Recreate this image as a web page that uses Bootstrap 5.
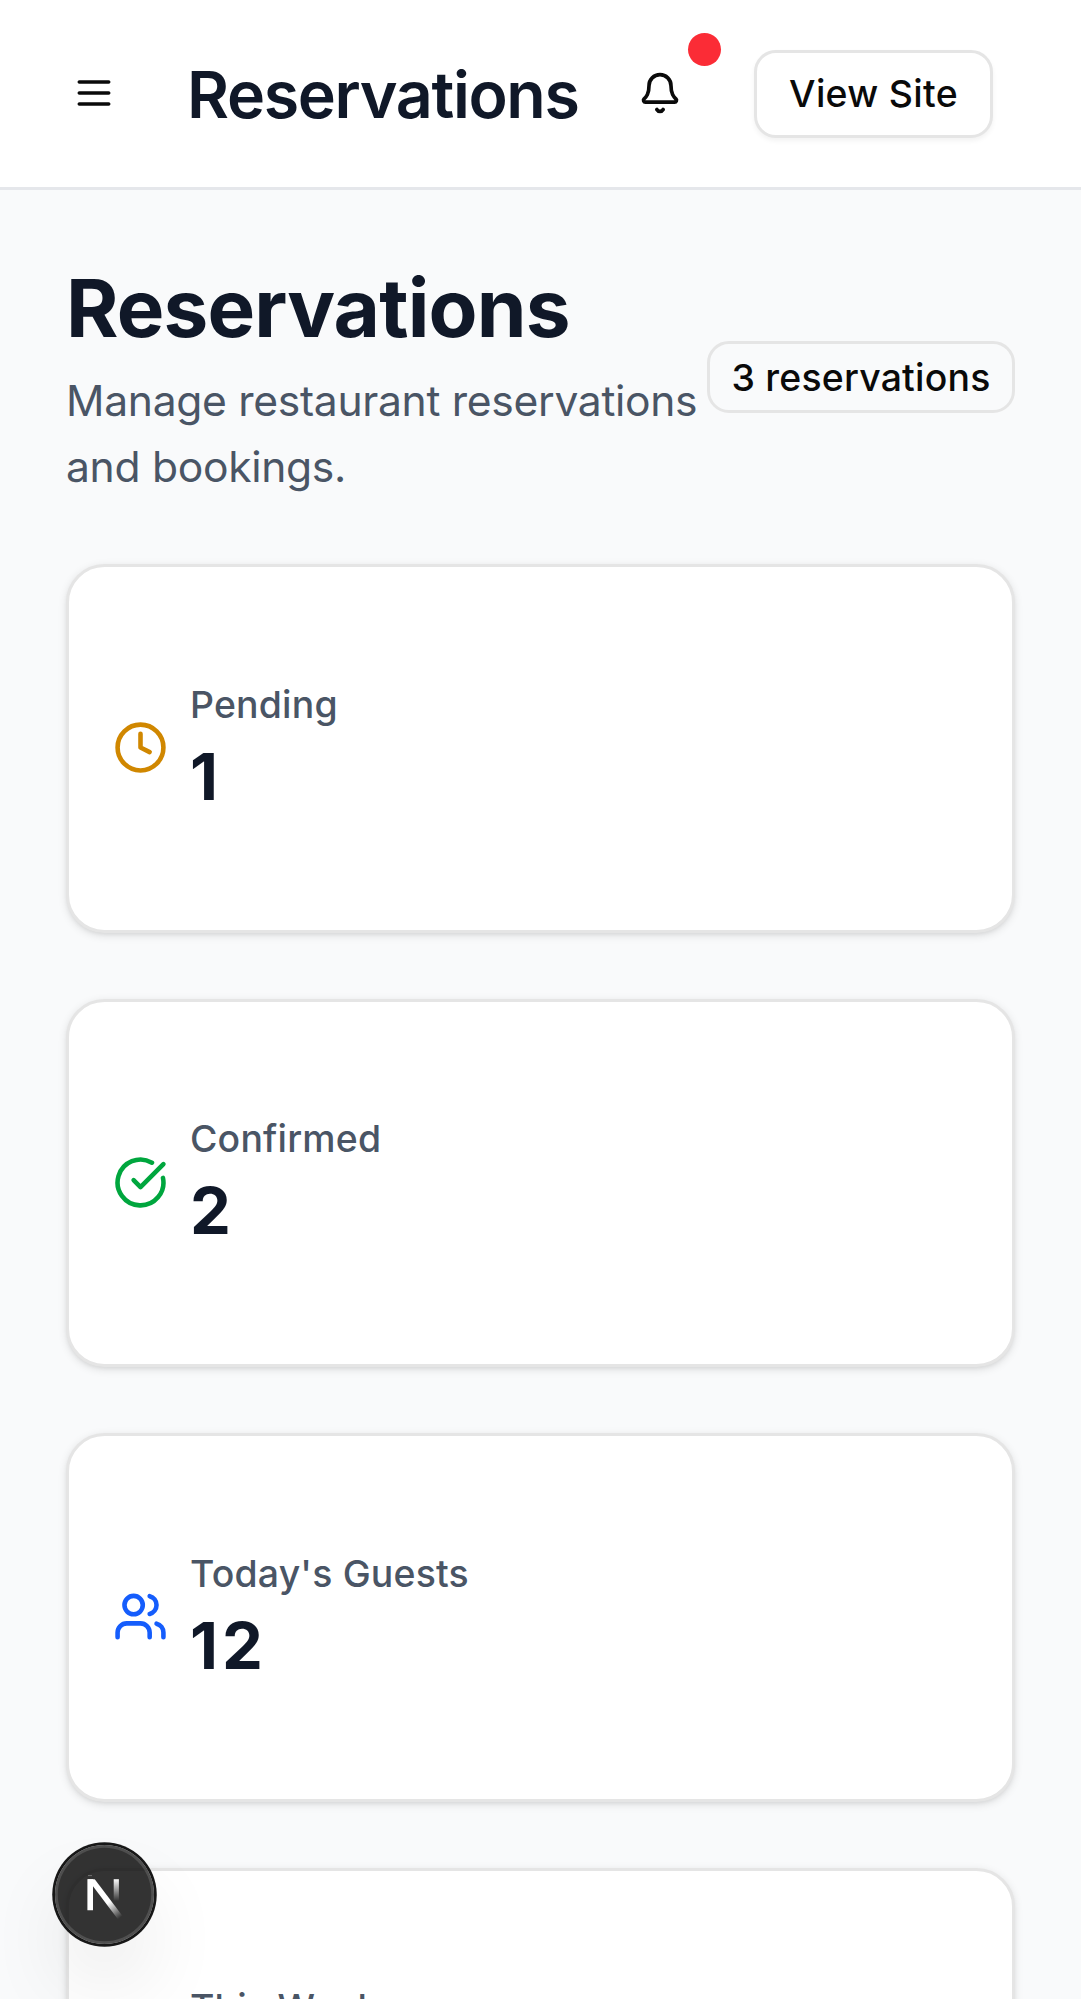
<!DOCTYPE html>
<html lang="en">
<head>
<meta charset="utf-8">
<meta name="viewport" content="width=device-width, initial-scale=1">
<title>Reservations</title>
<link href="https://cdn.jsdelivr.net/npm/bootstrap@5.3.0/dist/css/bootstrap.min.css" rel="stylesheet">
<style>
  body{font-family:Inter,"Noto Sans",sans-serif;background:#f9fafb;color:#0a0a0a;height:1999px;overflow:hidden}
  .topbar{height:190px;padding:0 88px 0 44px;border-bottom:3px solid #e5e7eb;background:#fff}
  .icon-btn{width:99px;height:88px;padding:0 0 1px;border:0;color:#0a0a0a}
  .bell-btn{margin-left:auto}
  .alert-dot{position:absolute;width:33px;height:33px;right:-11.5px;top:-17px;background:#fb2c36}
  .bar-title{font-size:64.5px;line-height:77px;font-weight:600;letter-spacing:-1.35px;color:#101828;margin-left:44px;padding-top:4px}
  .view-btn{width:239px;height:88px;padding:1px 0 0;margin-left:45px;border:3px solid #e5e5e5;border-radius:22px;font-size:37.4px;font-weight:500;letter-spacing:.3px;color:#0a0a0a;background:#fff;box-shadow:0 3px 5px rgba(0,0,0,.05)}
  .page{padding:66px}
  .page-title{font-size:80px;line-height:99px;font-weight:700;letter-spacing:-.85px;color:#101828;margin-bottom:11px;padding-top:2px}
  .page-sub{font-size:42.6px;line-height:66px;letter-spacing:-.31px;color:#4a5565;margin-bottom:-2px}
  .count-pill{width:308px;height:71.5px;padding-top:2px;border:3px solid #e5e5e5;border-radius:22px;font-size:37.4px;font-weight:500;letter-spacing:.22px}
  .stat-list{gap:66px;margin-top:66px}
  .stat-card{height:368.5px;padding:0 44px 1px 43.5px;gap:22.5px;border:3px solid #e5e5e5;border-radius:38.5px;box-shadow:0 2.75px 8px rgba(0,0,0,.1),0 2.75px 5.5px -2.75px rgba(0,0,0,.1)}
  .stat-label{font-size:37.4px;line-height:55px;font-weight:500;letter-spacing:.2px;color:#4a5565;padding-top:1px}
  .stat-num{font-size:65px;line-height:86px;padding-top:2px;font-weight:700;letter-spacing:4px;color:#101828}
  svg.line-icon{fill:none;stroke:currentColor;stroke-width:2;stroke-linecap:round;stroke-linejoin:round;flex:none}
  .dev-badge{position:absolute;left:55px;top:1845px;width:99px;height:99px;background:rgba(0,0,0,.8);box-shadow:0 0 0 2.75px #171717,inset 0 0 0 2.75px rgba(255,255,255,.14),0 44px 88px -22px rgba(0,0,0,.24)}
</style>
<script src="https://cdn.jsdelivr.net/npm/bootstrap@5.3.0/dist/js/bootstrap.bundle.min.js"></script>
</head>
<body class="position-relative">
<header class="topbar d-flex align-items-center">
  <button class="btn icon-btn d-flex align-items-center justify-content-center" aria-label="Menu">
    <svg class="line-icon" width="44" height="44" viewBox="0 0 24 24"><path d="M4 6h16M4 12h16M4 18h16"/></svg>
  </button>
  <h1 class="bar-title mb-0"><span>Reservations</span></h1>
  <button class="btn icon-btn bell-btn position-relative d-flex align-items-center justify-content-center" aria-label="Notifications">
    <svg class="line-icon" width="44" height="44" viewBox="0 0 24 24"><path d="M10.268 21a2 2 0 0 0 3.464 0"/><path d="M3.262 15.326A1 1 0 0 0 4 17h16a1 1 0 0 0 .74-1.673C19.41 13.956 18 12.499 18 8A6 6 0 0 0 6 8c0 4.499-1.411 5.956-2.738 7.326"/></svg>
    <span class="alert-dot rounded-circle"></span>
  </button>
  <button class="btn view-btn"><span>View Site</span></button>
</header>
<main class="page">
  <div class="d-flex align-items-center justify-content-between">
    <div>
      <h2 class="page-title"><span>Reservations</span></h2>
      <p class="page-sub text-nowrap"><span>Manage restaurant reservations</span><br>and bookings.</p>
    </div>
    <div class="count-pill d-flex align-items-center justify-content-center flex-shrink-0"><span>3 reservations</span></div>
  </div>
  <div class="stat-list d-flex flex-column">
    <section class="card stat-card flex-row align-items-center flex-shrink-0">
      <svg class="line-icon" width="55" height="55" viewBox="0 0 24 24" color="#d08700"><circle cx="12" cy="12" r="10"/><path d="M12 6v6l4 2"/></svg>
      <div><div class="stat-label"><span>Pending</span></div><div class="stat-num">1</div></div>
    </section>
    <section class="card stat-card flex-row align-items-center flex-shrink-0">
      <svg class="line-icon" width="55" height="55" viewBox="0 0 24 24" color="#00a63e"><path d="M21.801 10A10 10 0 1 1 17 3.335"/><path d="m9 11 3 3L22 4"/></svg>
      <div><div class="stat-label"><span>Confirmed</span></div><div class="stat-num">2</div></div>
    </section>
    <section class="card stat-card flex-row align-items-center flex-shrink-0">
      <svg class="line-icon" width="55" height="55" viewBox="0 0 24 24" color="#155dfc"><path d="M16 21v-2a4 4 0 0 0-4-4H6a4 4 0 0 0-4 4v2"/><path d="M16 3.128a4 4 0 0 1 0 7.744"/><path d="M22 21v-2a4 4 0 0 0-3-3.87"/><circle cx="9" cy="7" r="4"/></svg>
      <div><div class="stat-label"><span>Today's Guests</span></div><div class="stat-num">12</div></div>
    </section>
    <section class="card stat-card flex-row align-items-center flex-shrink-0">
      <svg class="line-icon" width="55" height="55" viewBox="0 0 24 24" color="#9810fa"><path d="M8 2v4M16 2v4M3 10h18"/><rect x="3" y="4" width="18" height="18" rx="2"/></svg>
      <div><div class="stat-label"><span>This Week</span></div><div class="stat-num">3</div></div>
    </section>
  </div>
</main>
<div class="dev-badge rounded-circle">
  <svg class="d-block" width="99" height="99" viewBox="0 0 99 99" fill="none" stroke-width="5.6">
    <defs>
      <linearGradient id="fadeDiag" gradientUnits="userSpaceOnUse" x1="54" y1="57" x2="66" y2="72"><stop stop-color="#fff"/><stop offset="1" stop-color="#fff" stop-opacity="0"/></linearGradient>
      <linearGradient id="fadeStem" gradientUnits="userSpaceOnUse" x1="0" y1="34" x2="0" y2="56"><stop stop-color="#fff"/><stop offset="1" stop-color="#fff" stop-opacity="0"/></linearGradient>
      <clipPath id="capLine"><path d="M0 34.2H99V99H0z"/></clipPath>
    </defs>
    <g clip-path="url(#capLine)"><path d="M35.2 65.2V34" stroke="#fff"/><path d="M32.5 29.3L65.5 73" stroke="url(#fadeDiag)"/></g>
    <path d="M61.3 34.2V56" stroke="url(#fadeStem)" stroke-width="5.2"/>
    <path d="M33 30.6h4" stroke="#fff" stroke-opacity=".3" stroke-width="1"/>
  </svg>
</div>
</body>
</html>
